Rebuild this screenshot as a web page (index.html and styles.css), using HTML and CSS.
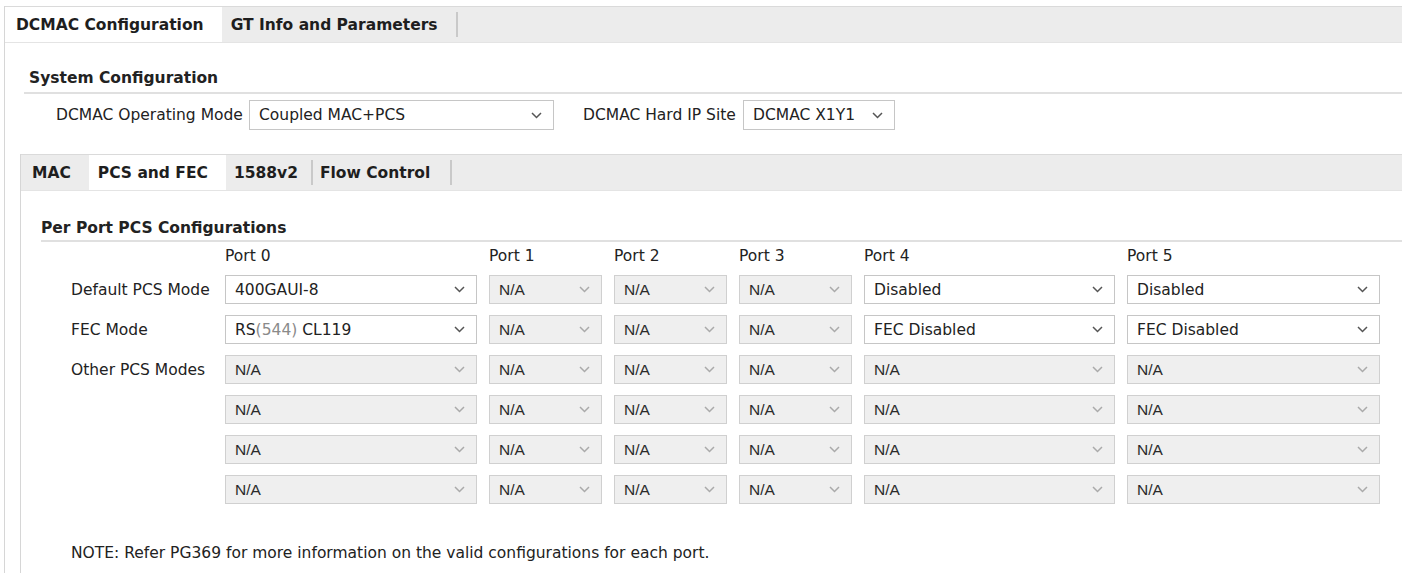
FILE: index.html
```html
<!DOCTYPE html>
<html>
<head>
<meta charset="utf-8">
<link rel="stylesheet" href="styles.css">
</head>
<body>
<div class="panel outer">
  <div class="tabbar outer-bar">
    <div class="tab active">DCMAC Configuration</div>
    <div class="tab">GT Info and Parameters</div>
    <div class="sep"></div>
  </div>
  <div class="outer-body">
    <div class="heading sys-heading">System Configuration</div>
    <div class="sys-row">
      <span class="label mode-label">DCMAC Operating Mode</span>
      <div class="combo w-mode"><span class="val">Coupled MAC+PCS</span><svg class="chev" width="11" height="7" viewBox="0 0 11 7"><polyline points="1,1 5.5,5.5 10,1"/></svg></div>
      <span class="label site-label">DCMAC Hard IP Site</span>
      <div class="combo w-site"><span class="val">DCMAC X1Y1</span><svg class="chev" width="11" height="7" viewBox="0 0 11 7"><polyline points="1,1 5.5,5.5 10,1"/></svg></div>
    </div>

    <div class="panel inner">
      <div class="tabbar inner-bar">
        <div class="tab">MAC</div>
        <div class="tab active">PCS and FEC</div>
        <div class="tab tight">1588v2</div>
        <div class="sep"></div>
        <div class="tab after-sep">Flow Control</div>
        <div class="sep"></div>
      </div>
      <div class="inner-body">
        <div class="heading pcs-heading">Per Port PCS Configurations</div>
        <div class="grid">
          <div></div>
          <div class="port">Port 0</div>
          <div class="port">Port 1</div>
          <div class="port">Port 2</div>
          <div class="port">Port 3</div>
          <div class="port">Port 4</div>
          <div class="port">Port 5</div>

          <div class="rowlabel">Default PCS Mode</div>
          <div class="combo"><span class="val">400GAUI-8</span><svg class="chev" width="11" height="7" viewBox="0 0 11 7"><polyline points="1,1 5.5,5.5 10,1"/></svg></div>
          <div class="combo dis"><span class="val">N/A</span><svg class="chev" width="11" height="7" viewBox="0 0 11 7"><polyline points="1,1 5.5,5.5 10,1"/></svg></div>
          <div class="combo dis"><span class="val">N/A</span><svg class="chev" width="11" height="7" viewBox="0 0 11 7"><polyline points="1,1 5.5,5.5 10,1"/></svg></div>
          <div class="combo dis"><span class="val">N/A</span><svg class="chev" width="11" height="7" viewBox="0 0 11 7"><polyline points="1,1 5.5,5.5 10,1"/></svg></div>
          <div class="combo"><span class="val">Disabled</span><svg class="chev" width="11" height="7" viewBox="0 0 11 7"><polyline points="1,1 5.5,5.5 10,1"/></svg></div>
          <div class="combo"><span class="val">Disabled</span><svg class="chev" width="11" height="7" viewBox="0 0 11 7"><polyline points="1,1 5.5,5.5 10,1"/></svg></div>

          <div class="rowlabel">FEC Mode</div>
          <div class="combo"><span class="val">RS<span class="muted">(544)</span> CL119</span><svg class="chev" width="11" height="7" viewBox="0 0 11 7"><polyline points="1,1 5.5,5.5 10,1"/></svg></div>
          <div class="combo dis"><span class="val">N/A</span><svg class="chev" width="11" height="7" viewBox="0 0 11 7"><polyline points="1,1 5.5,5.5 10,1"/></svg></div>
          <div class="combo dis"><span class="val">N/A</span><svg class="chev" width="11" height="7" viewBox="0 0 11 7"><polyline points="1,1 5.5,5.5 10,1"/></svg></div>
          <div class="combo dis"><span class="val">N/A</span><svg class="chev" width="11" height="7" viewBox="0 0 11 7"><polyline points="1,1 5.5,5.5 10,1"/></svg></div>
          <div class="combo"><span class="val">FEC Disabled</span><svg class="chev" width="11" height="7" viewBox="0 0 11 7"><polyline points="1,1 5.5,5.5 10,1"/></svg></div>
          <div class="combo"><span class="val">FEC Disabled</span><svg class="chev" width="11" height="7" viewBox="0 0 11 7"><polyline points="1,1 5.5,5.5 10,1"/></svg></div>

          <div class="rowlabel">Other PCS Modes</div>
          <div class="combo dis"><span class="val">N/A</span><svg class="chev" width="11" height="7" viewBox="0 0 11 7"><polyline points="1,1 5.5,5.5 10,1"/></svg></div>
          <div class="combo dis"><span class="val">N/A</span><svg class="chev" width="11" height="7" viewBox="0 0 11 7"><polyline points="1,1 5.5,5.5 10,1"/></svg></div>
          <div class="combo dis"><span class="val">N/A</span><svg class="chev" width="11" height="7" viewBox="0 0 11 7"><polyline points="1,1 5.5,5.5 10,1"/></svg></div>
          <div class="combo dis"><span class="val">N/A</span><svg class="chev" width="11" height="7" viewBox="0 0 11 7"><polyline points="1,1 5.5,5.5 10,1"/></svg></div>
          <div class="combo dis"><span class="val">N/A</span><svg class="chev" width="11" height="7" viewBox="0 0 11 7"><polyline points="1,1 5.5,5.5 10,1"/></svg></div>
          <div class="combo dis"><span class="val">N/A</span><svg class="chev" width="11" height="7" viewBox="0 0 11 7"><polyline points="1,1 5.5,5.5 10,1"/></svg></div>

          <div></div>
          <div class="combo dis"><span class="val">N/A</span><svg class="chev" width="11" height="7" viewBox="0 0 11 7"><polyline points="1,1 5.5,5.5 10,1"/></svg></div>
          <div class="combo dis"><span class="val">N/A</span><svg class="chev" width="11" height="7" viewBox="0 0 11 7"><polyline points="1,1 5.5,5.5 10,1"/></svg></div>
          <div class="combo dis"><span class="val">N/A</span><svg class="chev" width="11" height="7" viewBox="0 0 11 7"><polyline points="1,1 5.5,5.5 10,1"/></svg></div>
          <div class="combo dis"><span class="val">N/A</span><svg class="chev" width="11" height="7" viewBox="0 0 11 7"><polyline points="1,1 5.5,5.5 10,1"/></svg></div>
          <div class="combo dis"><span class="val">N/A</span><svg class="chev" width="11" height="7" viewBox="0 0 11 7"><polyline points="1,1 5.5,5.5 10,1"/></svg></div>
          <div class="combo dis"><span class="val">N/A</span><svg class="chev" width="11" height="7" viewBox="0 0 11 7"><polyline points="1,1 5.5,5.5 10,1"/></svg></div>

          <div></div>
          <div class="combo dis"><span class="val">N/A</span><svg class="chev" width="11" height="7" viewBox="0 0 11 7"><polyline points="1,1 5.5,5.5 10,1"/></svg></div>
          <div class="combo dis"><span class="val">N/A</span><svg class="chev" width="11" height="7" viewBox="0 0 11 7"><polyline points="1,1 5.5,5.5 10,1"/></svg></div>
          <div class="combo dis"><span class="val">N/A</span><svg class="chev" width="11" height="7" viewBox="0 0 11 7"><polyline points="1,1 5.5,5.5 10,1"/></svg></div>
          <div class="combo dis"><span class="val">N/A</span><svg class="chev" width="11" height="7" viewBox="0 0 11 7"><polyline points="1,1 5.5,5.5 10,1"/></svg></div>
          <div class="combo dis"><span class="val">N/A</span><svg class="chev" width="11" height="7" viewBox="0 0 11 7"><polyline points="1,1 5.5,5.5 10,1"/></svg></div>
          <div class="combo dis"><span class="val">N/A</span><svg class="chev" width="11" height="7" viewBox="0 0 11 7"><polyline points="1,1 5.5,5.5 10,1"/></svg></div>

          <div></div>
          <div class="combo dis"><span class="val">N/A</span><svg class="chev" width="11" height="7" viewBox="0 0 11 7"><polyline points="1,1 5.5,5.5 10,1"/></svg></div>
          <div class="combo dis"><span class="val">N/A</span><svg class="chev" width="11" height="7" viewBox="0 0 11 7"><polyline points="1,1 5.5,5.5 10,1"/></svg></div>
          <div class="combo dis"><span class="val">N/A</span><svg class="chev" width="11" height="7" viewBox="0 0 11 7"><polyline points="1,1 5.5,5.5 10,1"/></svg></div>
          <div class="combo dis"><span class="val">N/A</span><svg class="chev" width="11" height="7" viewBox="0 0 11 7"><polyline points="1,1 5.5,5.5 10,1"/></svg></div>
          <div class="combo dis"><span class="val">N/A</span><svg class="chev" width="11" height="7" viewBox="0 0 11 7"><polyline points="1,1 5.5,5.5 10,1"/></svg></div>
          <div class="combo dis"><span class="val">N/A</span><svg class="chev" width="11" height="7" viewBox="0 0 11 7"><polyline points="1,1 5.5,5.5 10,1"/></svg></div>
        </div>
        <div class="note">NOTE: Refer PG369 for more information on the valid configurations for each port.</div>
      </div>
    </div>
  </div>
</div>
</body>
</html>
```

FILE: styles.css
```css
html, body {
  margin: 0;
  padding: 0;
  background: #ffffff;
}
body {
  font-family: "DejaVu Sans", sans-serif;
  font-size: 15.5px;
  color: #222222;
  overflow: hidden;
  height: 573px;
}
.outer {
  margin: 6px 0 0 4px;
  border-left: 1px solid #d6d6d6;
  height: 567px;
}
.tabbar {
  display: flex;
  align-items: stretch;
  background: #ececec;
  border-top: 1px solid #dadada;
  border-bottom: 1px solid #e4e4e4;
}
.outer-bar {
  height: 35px;
}
.inner-bar {
  height: 35px;
}
.tab {
  display: flex;
  align-items: center;
  font-weight: bold;
  padding: 0 18px 0 9px;
  white-space: nowrap;
  color: #1e1e1e;
}
.tab:first-child {
  padding-left: 11px;
}
.tab.tight {
  padding: 0 13px 0 8px;
}
.tab.after-sep {
  padding: 0 20px 0 7px;
}
.tab.active {
  background: #ffffff;
}
.sep {
  width: 2px;
  background: #c9c9c9;
  margin: 5px 0 5px 0;
}
.outer-body {
  padding-left: 15px;
}
.heading {
  font-weight: bold;
  line-height: 18px;
  border-bottom: 2px solid #e0e0e0;
}
.sys-heading {
  margin-top: 26px;
  padding-left: 5px;
  margin-left: 4px;
  padding-bottom: 5px;
}
.sys-row {
  display: flex;
  align-items: center;
  margin-top: 6px;
  padding-left: 36px;
}
.label {
  white-space: nowrap;
}
.mode-label {
  width: 193px;
}
.site-label {
  margin-left: 29px;
  width: 160px;
}
.combo {
  box-sizing: border-box;
  height: 29px;
  border: 1px solid #c6c6c6;
  background: #ffffff;
  display: flex;
  align-items: center;
  justify-content: space-between;
  padding: 0 11px 0 9px;
  white-space: nowrap;
}
.sys-row .combo {
  height: 30px;
}
.w-mode {
  width: 305px;
}
.w-site {
  width: 152px;
}
.chev {
  flex: none;
}
.chev polyline {
  fill: none;
  stroke: #555555;
  stroke-width: 1.5;
}
.combo.dis {
  background: #efefef;
  border-color: #d0d0d0;
  font-family: "Liberation Sans", Arial, sans-serif;
  color: #2a2a2a;
}
.combo.dis .chev polyline {
  stroke: #aaaaaa;
}
.muted {
  color: #8a8a8a;
}
.inner {
  margin-top: 24px;
  border-left: 1px solid #d6d6d6;
  height: 430px;
}
.inner-body {
  padding-left: 20px;
}
.pcs-heading {
  margin-top: 28px;
  padding-bottom: 3px;
}
.grid {
  display: grid;
  grid-template-columns: 142px 252px 113px 113px 113px 251px 253px;
  column-gap: 12px;
  row-gap: 11px;
  margin-top: 5px;
  padding-left: 30px;
}
.port {
  line-height: 18px;
  margin-bottom: -1px;
}
.rowlabel {
  display: flex;
  align-items: center;
  white-space: nowrap;
}
.note {
  margin-top: 40px;
  padding-left: 30px;
  line-height: 18px;
}
```
